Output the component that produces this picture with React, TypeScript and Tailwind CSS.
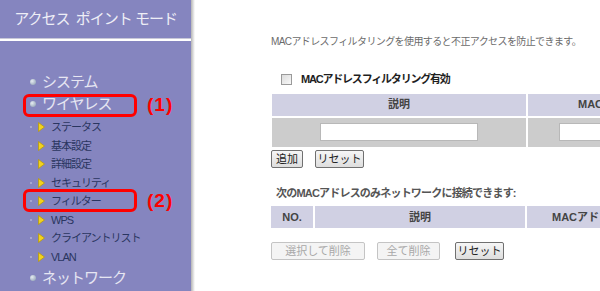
const FONT = "font-['Liberation_Sans','Noto_Sans_CJK_JP',sans-serif]"

const SUB_ITEMS = ['ステータス', '基本設定', '詳細設定', 'セキュリティ', 'フィルター', 'WPS', 'クライアントリスト', 'VLAN']

function Bullet() {
  return (
    <span className="mr-[6px] inline-block size-[6px] shrink-0 rounded-full bg-[radial-gradient(circle_at_35%_35%,#e6ecf2,#8698ad)]" />
  )
}

function SubArrow() {
  return (
    <span className="flex items-center">
      <span className="mr-[6px] size-[2px] bg-[#a6a6cf]" />
      <svg width="7" height="10" viewBox="0 0 7 10" className="mr-[6px]">
        <path d="M0.5 0.5 L6.5 5 L0.5 9.5 Z" fill="#f2d21e" stroke="#b89a10" strokeWidth="0.8" />
      </svg>
    </span>
  )
}

function Sidebar() {
  return (
    <div className="flex w-[195px] shrink-0">
      <div className="flex w-[191px] flex-col">
        <div className="flex h-[38px] items-center justify-end whitespace-nowrap bg-[#8585bf] pr-[14px] text-[15px] tracking-[-1px] text-[#eeeef6]">
          アクセス&nbsp;&nbsp;ポイント&nbsp;モード
        </div>
        <div className="h-px bg-[#c8c8d8]" />
        <div className="h-[2px] bg-white" />
        <div className="flex flex-1 flex-col bg-[#8585bf] pl-[30px] pt-[30px]">
          <div className="flex h-[22px] items-center whitespace-nowrap text-[15px] tracking-[-1px] text-[#e6e6f2]">
            <Bullet />
            システム
          </div>
          <div className="flex h-[22px] items-center whitespace-nowrap text-[15px] tracking-[-1px] text-[#e6e6f2]">
            <Bullet />
            ワイヤレス
          </div>
          <div className="flex flex-col pb-[1px] pt-[3px]">
            {SUB_ITEMS.map((item) => (
              <div key={item} className="flex h-[18.5px] items-center whitespace-nowrap text-[11px] tracking-[-1px] text-[#2a3560]">
                <SubArrow />
                {item}
              </div>
            ))}
          </div>
          <div className="flex h-[22px] items-center whitespace-nowrap text-[15px] tracking-[-1px] text-[#e6e6f2]">
            <Bullet />
            ネットワーク
          </div>
        </div>
      </div>
      <div className="w-[4px] bg-[linear-gradient(to_right,#b4b4b4,#ffffff)]" />
    </div>
  )
}

function Btn({ label, disabled, width }: { label: string; disabled?: boolean; width: string }) {
  return (
    <button
      className={`h-[18px] shrink-0 rounded-[2px] border text-[11px] leading-[16px] ${width} ${
        disabled
          ? 'border-[#c4c4c4] bg-[#f4f4f4] text-[#a8a8a8]'
          : 'border-[#707070] bg-[linear-gradient(#f6f6f6,#dedede)] text-[#222]'
      }`}
    >
      {label}
    </button>
  )
}

function Content() {
  return (
    <div className="flex min-w-0 flex-1 flex-col overflow-hidden pl-[76px] pt-[35px]">
      <p className="whitespace-nowrap text-[10px] leading-[14px] tracking-[-0.6px] text-[#6b6b6b]">
        MACアドレスフィルタリングを使用すると不正アクセスを防止できます。
      </p>
      <div className="mt-[22px] flex items-center pl-[10px]">
        <span className="mr-[9px] size-[11px] border border-[#9a9a9a] bg-[linear-gradient(135deg,#dcdcdc,#f8f8f8)]" />
        <span className="whitespace-nowrap text-[11px] font-bold tracking-[-1.2px] text-[#1e1e1e]">MACアドレスフィルタリング有効</span>
      </div>
      <div className="mt-[6px] grid w-[420px] grid-cols-[254px_1fr] gap-[2px] border-l border-white">
        <div className="flex h-[22px] items-center justify-center bg-[#d0d0e3] text-[11px] font-bold text-[#444]">説明</div>
        <div className="flex h-[22px] items-center bg-[#d0d0e3] pl-[50px] text-[11px] font-bold text-[#444]">MAC</div>
        <div className="flex h-[29px] items-center justify-center bg-[#cccccc]">
          <div className="h-[18px] w-[158px] border border-[#b8b8b8] bg-white" />
        </div>
        <div className="flex h-[29px] items-center bg-[#cccccc] pl-[31px]">
          <div className="h-[18px] w-[158px] border border-[#b8b8b8] bg-white" />
        </div>
      </div>
      <div className="mt-[3px] flex gap-[12px]">
        <Btn label="追加" width="w-[32px]" />
        <Btn label="リセット" width="w-[49px]" />
      </div>
      <p className="mt-[17px] whitespace-nowrap pl-[5px] text-[11px] font-bold tracking-[-0.8px] text-[#555]">次のMACアドレスのみネットワークに接続できます:</p>
      <div className="mt-[5px] grid w-[420px] grid-cols-[42px_210px_1fr] gap-[2px]">
        <div className="flex h-[22px] items-center justify-center bg-[#d0d0e3] text-[11px] font-bold text-[#444]">NO.</div>
        <div className="flex h-[22px] items-center justify-center bg-[#d0d0e3] text-[11px] font-bold text-[#444]">説明</div>
        <div className="flex h-[22px] items-center whitespace-nowrap bg-[#d0d0e3] pl-[25px] text-[11px] font-bold text-[#444]">MACアドレス</div>
      </div>
      <div className="mt-[14px] flex">
        <Btn label="選択して削除" disabled width="w-[94px]" />
        <span className="w-[12px] shrink-0" />
        <Btn label="全て削除" disabled width="w-[63px]" />
        <span className="w-[15px] shrink-0" />
        <Btn label="リセット" width="w-[49px]" />
      </div>
    </div>
  )
}

export default function App() {
  return (
    <div className={`relative flex h-[291px] w-[600px] overflow-hidden bg-white ${FONT}`}>
      <Sidebar />
      <Content />
      <div className="absolute left-[23px] top-[94px] h-[23px] w-[114px] rounded-[6px] border-[3px] border-[#ff0000]" />
      <div className="absolute left-[147px] top-[91px] text-[19px] font-bold tracking-[1px] text-[#ff0000]">(1)</div>
      <div className="absolute left-[23px] top-[189px] h-[23px] w-[114px] rounded-[6px] border-[3px] border-[#ff0000]" />
      <div className="absolute left-[147px] top-[187px] text-[19px] font-bold tracking-[1px] text-[#ff0000]">(2)</div>
    </div>
  )
}
